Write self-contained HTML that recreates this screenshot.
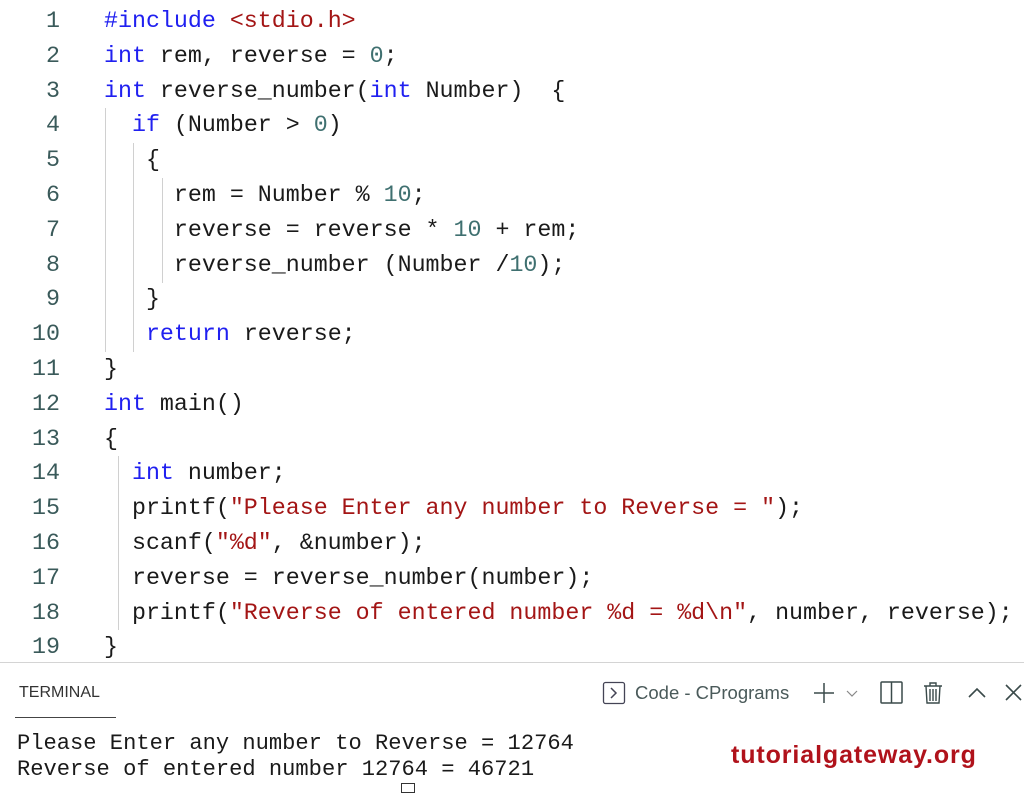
<!DOCTYPE html>
<html><head><style>
body{margin:0;width:1024px;height:788px;background:#fff;overflow:hidden;position:relative;font-family:"Liberation Mono",monospace;}
.ln{position:absolute;left:0;width:60px;text-align:right;font-size:23.3px;color:#3a5a5a;}
.cd{position:absolute;left:104px;font-size:23.3px;color:#1a1a1a;white-space:pre;}
.k{color:#2020f0}.s{color:#a31515}.n{color:#3f7070}
.g{position:absolute;width:1px;background:#d0d0d0;}
.term{position:absolute;left:17px;font-size:22.1px;color:#1a1a1a;white-space:pre;}
</style></head><body>
<div id="code"></div>
<script>
var L=['<span class="k">#include</span> <span class="s">&lt;stdio.h&gt;</span>',
'<span class="k">int</span> rem, reverse = <span class="n">0</span>;',
'<span class="k">int</span> reverse_number(<span class="k">int</span> Number)  {',
'  <span class="k">if</span> (Number &gt; <span class="n">0</span>)',
'   {',
'     rem = Number % <span class="n">10</span>;',
'     reverse = reverse * <span class="n">10</span> + rem;',
'     reverse_number (Number /<span class="n">10</span>);',
'   }',
'   <span class="k">return</span> reverse;',
'}',
'<span class="k">int</span> main()',
'{',
'  <span class="k">int</span> number;',
'  printf(<span class="s">"Please Enter any number to Reverse = "</span>);',
'  scanf(<span class="s">"%d"</span>, &amp;number);',
'  reverse = reverse_number(number);',
'  printf(<span class="s">"Reverse of entered number %d = %d\\n"</span>, number, reverse);',
'}'];
var h='';
for(var i=0;i<L.length;i++){var y=8+i*34.8;
h+='<div class="ln" style="top:'+y+'px">'+(i+1)+'</div><div class="cd" style="top:'+y+'px">'+L[i]+'</div>';}
document.getElementById('code').innerHTML=h;
</script>
<div class="g" style="left:105px;top:108px;height:244px"></div>
<div class="g" style="left:133px;top:143px;height:209px"></div>
<div class="g" style="left:162px;top:178px;height:105px"></div>
<div class="g" style="left:118px;top:456px;height:174px"></div>
<div style="position:absolute;left:0;top:662px;width:1024px;height:1px;background:#d4d4d4"></div>
<div style="position:absolute;left:19px;top:684px;font-family:'Liberation Sans',sans-serif;font-size:16px;color:#333">TERMINAL</div>
<div style="position:absolute;left:15px;top:717px;width:101px;height:1px;background:#444"></div>
<svg style="position:absolute;left:602px;top:681px" width="24" height="24"><rect x="1.5" y="1.5" width="21" height="21" rx="2" fill="none" stroke="#445" stroke-width="1.3"/><path d="M9 7l5 5-5 5" fill="none" stroke="#445" stroke-width="1.5"/></svg>
<div style="position:absolute;left:635px;top:682px;font-family:'Liberation Sans',sans-serif;font-size:18.5px;color:#4a5a5a">Code - CPrograms</div>
<svg style="position:absolute;left:812px;top:681px;" width="52" height="24"><path d="M12 2v20M2 12h20" stroke="#3a4a4a" stroke-width="1.5"/><path d="M35 10l5 5 5-5" fill="none" stroke="#888" stroke-width="1.2"/></svg>
<svg style="position:absolute;left:880px;top:681px" width="24" height="24"><rect x="1" y="1" width="21" height="21" rx="1" fill="none" stroke="#3a4a4a" stroke-width="1.5"/><path d="M11.5 1v21" stroke="#3a4a4a" stroke-width="1.5"/></svg>
<svg style="position:absolute;left:922px;top:681px" width="22" height="24"><path d="M2 5h18M8 5V2h6v3M4 5l1 17h12l1-17M8 8v12M11 8v12M14 8v12" fill="none" stroke="#3a4a4a" stroke-width="1.4"/></svg>
<svg style="position:absolute;left:967px;top:683px" width="20" height="20"><path d="M2 14l8-8 8 8" fill="none" stroke="#3a4a4a" stroke-width="1.6"/></svg>
<svg style="position:absolute;left:1004px;top:683px" width="20" height="20"><path d="M2 2l15 15M17 2L2 17" fill="none" stroke="#3a4a4a" stroke-width="1.6"/></svg>
<div class="term" style="top:731px">Please Enter any number to Reverse = 12764</div>
<div class="term" style="top:757px">Reverse of entered number 12764 = 46721</div>
<div style="position:absolute;left:401px;top:783px;width:12px;height:8px;border:1px solid #333"></div>
<div style="position:absolute;left:731px;top:741px;font-family:'Liberation Sans',sans-serif;font-weight:bold;font-size:25px;color:#b0121b;letter-spacing:0.9px">tutorialgateway.org</div>
</body></html>
